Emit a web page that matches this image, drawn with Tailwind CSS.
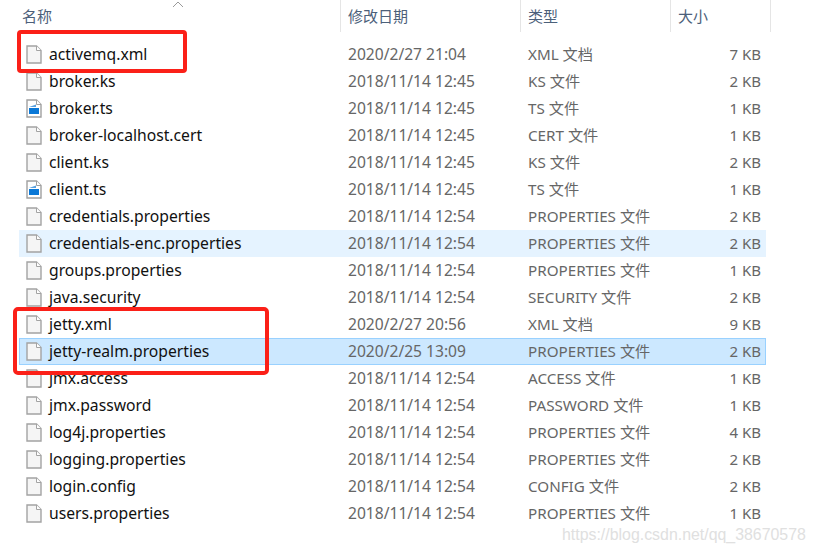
<!DOCTYPE html>
<html lang="en">
  <head>
    <meta charset="UTF-8" />
    <script src="https://cdn.jsdelivr.net/npm/@tailwindcss/browser@4"></script>
    <title>apache-activemq conf</title>
  </head>
  <body class="relative w-[815px] h-[553px] overflow-hidden bg-white font-['Noto_Sans','Noto_Sans_CJK_SC',sans-serif]">
    <!-- column header -->
    <div class="relative flex h-8 text-[15px] text-[#4c607a]">
      <svg class="absolute left-[172px] top-[1px]" width="12" height="7" viewBox="0 0 12 7" fill="none"><path d="M1 6 L6 1 L11 6" stroke="#9a9a9a" /></svg>
      <div class="w-[340px] pl-[22px] pt-[5px]">名称</div>
      <div class="w-[180px] pl-[7px] pt-[5px] border-l border-[#e5e5e5]">修改日期</div>
      <div class="w-[150px] pl-[7px] pt-[5px] border-l border-[#e5e5e5]">类型</div>
      <div class="w-[101px] pl-[7px] pt-[5px] border-x border-[#e5e5e5]">大小</div>
    </div>

    <!-- file rows -->
    <div id="rows" class="mt-[9px] ml-[19px] w-[747px]"></div>

    <!-- red marks drawn on the screenshot -->
    <div class="absolute left-[17px] top-[30px] w-[170px] h-[43px] rounded-[4px] border-[4px] border-[#fb2018]"></div>
    <div class="absolute left-[13px] top-[307px] w-[256px] h-[68px] rounded-[5px] border-[4px] border-[#fb2018]"></div>

    <!-- watermark -->
    <div class="absolute left-[562px] top-[526px] text-[15.9px] leading-[18px] text-[#e0e0e0] font-['Liberation_Sans',sans-serif]">https://blog.csdn.net/qq_38670578</div>

    <script>
      const files = [
        ['activemq.xml', '2020/2/27 21:04', 'XML 文档', '7 KB'],
        ['broker.ks', '2018/11/14 12:45', 'KS 文件', '2 KB'],
        ['broker.ts', '2018/11/14 12:45', 'TS 文件', '1 KB', 'ts'],
        ['broker-localhost.cert', '2018/11/14 12:45', 'CERT 文件', '1 KB'],
        ['client.ks', '2018/11/14 12:45', 'KS 文件', '2 KB'],
        ['client.ts', '2018/11/14 12:45', 'TS 文件', '1 KB', 'ts'],
        ['credentials.properties', '2018/11/14 12:54', 'PROPERTIES 文件', '2 KB'],
        ['credentials-enc.properties', '2018/11/14 12:54', 'PROPERTIES 文件', '2 KB', '', 'hover'],
        ['groups.properties', '2018/11/14 12:54', 'PROPERTIES 文件', '1 KB'],
        ['java.security', '2018/11/14 12:54', 'SECURITY 文件', '2 KB'],
        ['jetty.xml', '2020/2/27 20:56', 'XML 文档', '9 KB'],
        ['jetty-realm.properties', '2020/2/25 13:09', 'PROPERTIES 文件', '2 KB', '', 'selected'],
        ['jmx.access', '2018/11/14 12:54', 'ACCESS 文件', '1 KB'],
        ['jmx.password', '2018/11/14 12:54', 'PASSWORD 文件', '1 KB'],
        ['log4j.properties', '2018/11/14 12:54', 'PROPERTIES 文件', '4 KB'],
        ['logging.properties', '2018/11/14 12:54', 'PROPERTIES 文件', '2 KB'],
        ['login.config', '2018/11/14 12:54', 'CONFIG 文件', '2 KB'],
        ['users.properties', '2018/11/14 12:54', 'PROPERTIES 文件', '1 KB'],
      ]

      const plainIcon = `<svg width="16" height="19" viewBox="0 0 16 19"><path d="M1 1 H10.5 L15 5.5 V18 H1 Z" fill="#f5f5f5" stroke="#a3a3a3" stroke-width="1.4" /><path d="M10.5 1 V5.5 H15" fill="#fff" stroke="#a3a3a3" /></svg>`
      const tsIcon = `<svg width="16" height="19" viewBox="0 0 16 19"><path d="M1 1 H10.5 L15 5.5 V18 H1 Z" fill="#fff" stroke="#a0a0a0" stroke-width="1.4" /><path d="M10.5 1 V5.5 H15" fill="#fff" stroke="#a0a0a0" /><rect x="3" y="9" width="10" height="6" fill="#0a78d7" /><path d="M3 8 L10 5.5 V8 Z" fill="#5aa2e0" /></svg>`

      const rowStyle = {
        '': 'border border-transparent',
        hover: 'border border-transparent bg-[#e5f3ff]',
        selected: 'border border-[#99d1ff] bg-[#cce8ff]',
      }

      document.querySelector('#rows').innerHTML = files
        .map(
          ([name, date, type, size, icon, state]) => `
        <div class="flex items-center h-[27px] ${rowStyle[state || '']}">
          <span class="flex w-[29px] pl-[6px] shrink-0">${icon ? tsIcon : plainIcon}</span>
          <span class="w-[299px] shrink-0 text-[15.7px] text-[#111111]">${name}</span>
          <span class="w-[180px] shrink-0 pt-px text-[15.6px] text-[#666666]">${date}</span>
          <span class="w-[170px] shrink-0 text-[15.2px] text-[#666666]">${type}</span>
          <span class="w-[63px] shrink-0 text-right text-[15px] text-[#666666]">${size}</span>
        </div>`
        )
        .join('')
    </script>
  </body>
</html>
